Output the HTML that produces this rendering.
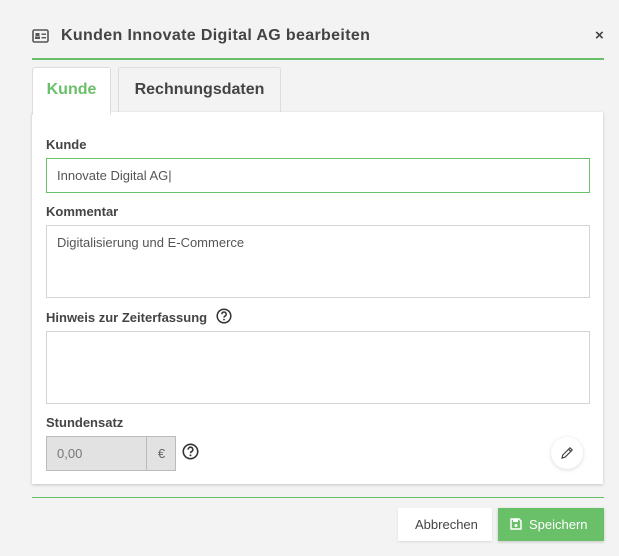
<!DOCTYPE html>
<html><head><meta charset="utf-8"><style>
*{box-sizing:border-box;margin:0;padding:0}
body{width:619px;height:556px;background:#f3f3f3;font-family:"Liberation Sans",sans-serif;position:relative;overflow:hidden;color:#444}
.a{position:absolute}
.lbl{position:absolute;left:46px;font-size:13px;font-weight:bold;color:#444}
.inp{position:absolute;left:46px;width:544px;background:#fff;border:1px solid #d4d4d4;font-size:13px;color:#555;padding:0 10px}
</style></head><body>
<svg class="a" style="left:32px;top:29px" width="17" height="14" viewBox="0 0 17 14"><rect x="1" y="1" width="15" height="12" rx="1.5" fill="none" stroke="#555" stroke-width="1.6"/><rect x="3.5" y="4" width="4" height="3" fill="#555"/><rect x="3" y="7.5" width="5" height="2.5" fill="#555"/><rect x="9.5" y="4.5" width="4.5" height="1.4" fill="#555"/><rect x="9.5" y="8" width="4.5" height="1.4" fill="#555"/></svg>
<div class="a" style="left:61px;top:27px;font-size:16px;font-weight:bold;color:#444;letter-spacing:0.35px">Kunden Innovate Digital AG bearbeiten</div>
<div class="a" style="left:595px;top:27px;font-size:15px;font-weight:bold;color:#444">×</div>
<div class="a" style="left:32px;top:58px;width:572px;height:2px;background:#6abf69"></div>
<div class="a" style="left:118px;top:67px;width:163px;height:46px;border:1px solid #ddd;border-bottom:none;background:#f3f3f3;border-radius:3px 3px 0 0;font-size:16px;font-weight:bold;color:#444;text-align:center;line-height:44px">Rechnungsdaten</div>
<div class="a" style="left:32px;top:112px;width:571px;height:372px;background:#fff;box-shadow:0 1px 3px rgba(0,0,0,.2)"></div>
<div class="a" style="left:32px;top:67px;width:79px;height:48px;border:1px solid #ddd;border-bottom:none;background:#fff;border-radius:3px 3px 0 0;font-size:16px;font-weight:bold;color:#6abf69;text-align:center;line-height:44px">Kunde</div>
<div class="lbl" style="top:137px">Kunde</div>
<div class="inp" style="top:158px;height:35px;border-color:#6abf69;line-height:33px">Innovate Digital AG|</div>
<div class="lbl" style="top:204px">Kommentar</div>
<div class="inp" style="top:225px;height:73px;padding-top:9px">Digitalisierung und E-Commerce</div>
<div class="lbl" style="top:310px">Hinweis zur Zeiterfassung</div>
<svg class="a" style="left:216px;top:308px" width="16" height="16" viewBox="0 0 16 16"><circle cx="8" cy="8" r="6.8" fill="none" stroke="#333" stroke-width="1.5"/><path d="M5.8 6.2a2.2 2.2 0 1 1 3 2c-.6.3-.8.7-.8 1.4" fill="none" stroke="#333" stroke-width="1.5"/><circle cx="8" cy="11.6" r=".9" fill="#333"/></svg>
<div class="inp" style="top:331px;height:73px"></div>
<div class="lbl" style="top:415px">Stundensatz</div>
<div class="a" style="left:46px;top:436px;width:130px;height:35px;border:1px solid #bbb;background:#e2e2e2;font-size:13px;color:#777;line-height:33px;padding-left:10px">0,00</div>
<div class="a" style="left:146px;top:436px;width:30px;height:35px;border-left:1px solid #bbb;font-size:13px;color:#666;line-height:35px;text-align:center">€</div>
<svg class="a" style="left:182px;top:443px" width="17" height="17" viewBox="0 0 16 16"><circle cx="8" cy="8" r="6.8" fill="none" stroke="#333" stroke-width="1.5"/><path d="M5.8 6.2a2.2 2.2 0 1 1 3 2c-.6.3-.8.7-.8 1.4" fill="none" stroke="#333" stroke-width="1.5"/><circle cx="8" cy="11.6" r=".9" fill="#333"/></svg>
<div class="a" style="left:551px;top:437px;width:32px;height:32px;border-radius:50%;background:#fff;box-shadow:0 1px 4px rgba(0,0,0,.15)"></div>
<svg class="a" style="left:560px;top:446px" width="14" height="14" viewBox="0 0 14 14"><path d="M2 12l.8-3L10 1.8l2.2 2.2L5 11.2zM8.6 3.2l2.2 2.2" fill="none" stroke="#444" stroke-width="1.2"/></svg>
<div class="a" style="left:32px;top:497px;width:572px;height:1px;background:#6abf69"></div>
<div class="a" style="left:398px;top:508px;width:94px;height:33px;background:#fff;box-shadow:0 1px 2px rgba(0,0,0,.1);font-size:13px;color:#444;line-height:33px;padding-left:17px">Abbrechen</div>
<div class="a" style="left:498px;top:508px;width:106px;height:33px;background:#6abf69;box-shadow:0 1px 3px rgba(0,0,0,.2);font-size:13px;color:#fff;line-height:33px;padding-left:31px">Speichern</div>
<svg class="a" style="left:510px;top:518px" width="12" height="12" viewBox="0 0 12 12"><path d="M1 1h8l2 2v8H1z" fill="none" stroke="#fff" stroke-width="1.5"/><rect x="3" y="1" width="5" height="3" fill="#fff"/><circle cx="6" cy="7.5" r="1.5" fill="#fff"/></svg>
</body></html>
